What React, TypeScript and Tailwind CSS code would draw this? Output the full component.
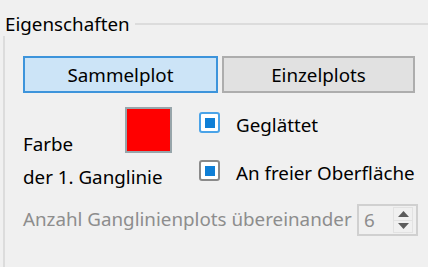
export default function App() {
  return (
    <div className="w-[428px] h-[267px] overflow-hidden bg-[#f0f0f0] text-black font-['Noto_Sans',sans-serif] text-[18.8px] leading-[24px]">
      {/* group box title */}
      <div className="mt-[12px] flex h-[24px] items-center pl-[5px]">
        <span className="whitespace-nowrap">Eigenschaften</span>
        <div className="ml-[5px] h-[2px] flex-1 bg-[#dcdcdc]" />
      </div>

      <div className="ml-[3px] h-[300px] border-l-2 border-[#dcdcdc] pl-[18px] pt-[20px]">
        {/* mode buttons */}
        <div className="flex gap-[4px]">
          <button className="flex h-[37px] w-[195px] items-center justify-center border-2 border-[#3d94db] bg-[#cce4f7]">
            Sammelplot
          </button>
          <button className="flex h-[37px] w-[193px] items-center justify-center border-2 border-[#adadad] bg-[#e1e1e1]">
            Einzelplots
          </button>
        </div>

        {/* colour + options */}
        <div className="mt-[14px] flex h-[85px] items-start">
          <div className="w-[102px] whitespace-nowrap">
            <div className="mt-[25px]">Farbe</div>
            <div className="mt-[9px]">der 1. Ganglinie</div>
          </div>
          <div className="h-[46px] w-[47px] border-2 border-[#97a5aa] bg-[#ff0000]" />
          <div className="ml-[27px] mt-[5px] flex flex-col gap-[23px]">
            <div className="flex items-start gap-[16px]">
              <span className="flex h-[21px] w-[21px] items-center justify-center rounded-[3px] border-2 border-[#4aa3e8] bg-white">
                <span className="h-[10px] w-[10px] bg-[#0f7fd6]" />
              </span>
              <span className="mt-[1px] whitespace-nowrap">Geglättet</span>
            </div>
            <div className="flex items-start gap-[16px]">
              <span className="flex h-[21px] w-[21px] items-center justify-center rounded-[3px] border-2 border-[#8a8a8a] bg-white">
                <span className="h-[10px] w-[10px] bg-[#0f7fd6]" />
              </span>
              <span className="mt-[1px] whitespace-nowrap">An freier Oberfläche</span>
            </div>
          </div>
        </div>

        {/* disabled spin row */}
        <div className="mt-[12px] flex items-start">
          <span className="mt-[3px] w-[334px] whitespace-nowrap text-[#8d8d8d]">
            Anzahl Ganglinienplots übereinander
          </span>
          <div className="flex h-[32px] w-[61px] items-center justify-between border-2 border-[#d0d0d0] bg-[#f0f0f0] pl-[5px] pr-[3px]">
            <span className="text-[#8d8d8d]">6</span>
            <div className="flex h-[26px] w-[20px] flex-col border border-[#e2e2e2]">
              <div className="flex flex-1 items-center justify-center border-b border-[#e2e2e2]">
                <svg width="11" height="6" viewBox="0 0 11 6">
                  <path d="M0 6 L5.5 0 L11 6 Z" fill="#5c5c5c" />
                </svg>
              </div>
              <div className="flex flex-1 items-center justify-center">
                <svg width="11" height="6" viewBox="0 0 11 6">
                  <path d="M0 0 L11 0 L5.5 6 Z" fill="#5c5c5c" />
                </svg>
              </div>
            </div>
          </div>
        </div>
      </div>
    </div>
  );
}
